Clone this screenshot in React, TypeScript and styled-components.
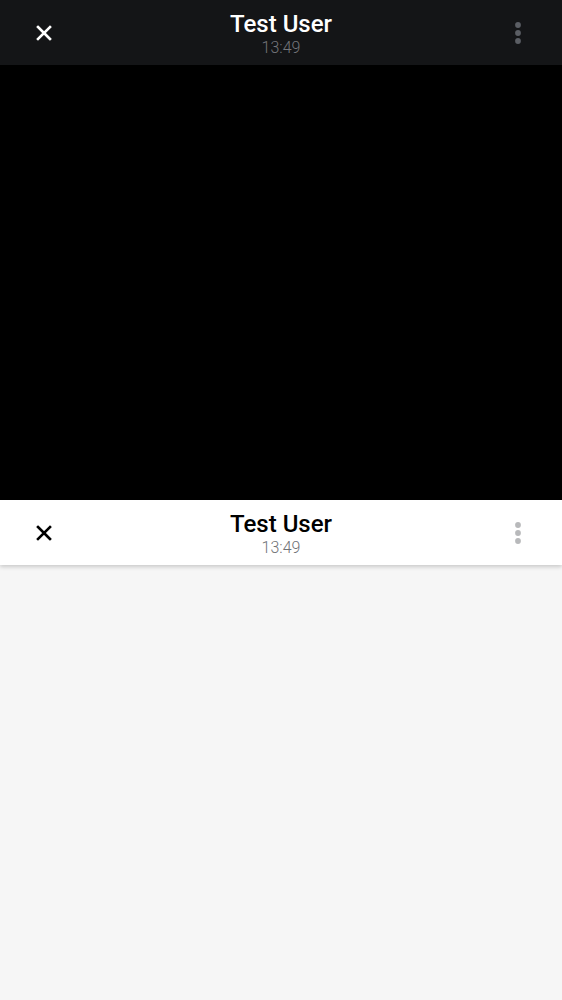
import React from "react";
import styled, { createGlobalStyle } from "styled-components";

const Global = createGlobalStyle`
  html, body { margin: 0; padding: 0; }
  body { background: #f6f6f6; font-family: Roboto, "Noto Sans", sans-serif; }
`;

const Page = styled.div`
  width: 562px;
  min-height: 1000px;
  display: flex;
  flex-direction: column;
  background: #f6f6f6;
`;

const Header = styled.header<{ $dark?: boolean }>`
  height: 65px;
  flex: none;
  display: grid;
  grid-template-columns: 88px 1fr 88px;
  align-items: center;
  background: ${(p) => (p.$dark ? "#141517" : "#ffffff")};
  color: ${(p) => (p.$dark ? "#ffffff" : "#000000")};
  box-shadow: ${(p) => (p.$dark ? "none" : "0 2px 4px rgba(0,0,0,0.18)")};
  position: relative;
  z-index: 1;
`;

const IconButton = styled.button<{ $color: string }>`
  border: 0;
  background: transparent;
  padding: 0;
  width: 88px;
  height: 65px;
  display: flex;
  align-items: center;
  justify-content: center;
  color: ${(p) => p.$color};
`;

const TitleBox = styled.div`
  display: flex;
  flex-direction: column;
  align-items: center;
  padding-top: 2px;
`;

const Title = styled.div`
  font-size: 24px;
  font-weight: 500;
  line-height: 24px;
`;

const Time = styled.div<{ $dark?: boolean }>`
  font-size: 16px;
  font-weight: 300;
  line-height: 16px;
  color: ${(p) => (p.$dark ? "#74767b" : "#707276")};
  margin-top: 4px;
`;

const Video = styled.div`
  height: 435px;
  background: #000;
  flex: none;
`;

const Body = styled.div`
  flex: 1;
  background: #f6f6f6;
`;

const CloseIcon = () => (
  <svg width="16" height="16" viewBox="0 0 16 16">
    <path d="M2 2 L14 14 M14 2 L2 14" stroke="currentColor" strokeWidth="2.6" strokeLinecap="square" />
  </svg>
);

const MoreIcon = () => (
  <svg width="8" height="24" viewBox="0 0 8 24">
    <circle cx="4" cy="4" r="2.9" fill="currentColor" />
    <circle cx="4" cy="12" r="2.9" fill="currentColor" />
    <circle cx="4" cy="20" r="2.9" fill="currentColor" />
  </svg>
);

const Bar = ({ dark }: { dark?: boolean }) => (
  <Header $dark={dark}>
    <IconButton $color={dark ? "#ffffff" : "#000000"}>
      <CloseIcon />
    </IconButton>
    <TitleBox>
      <Title>Test User</Title>
      <Time $dark={dark}>13:49</Time>
    </TitleBox>
    <IconButton $color={dark ? "#5b5e64" : "#b8b9bb"}>
      <MoreIcon />
    </IconButton>
  </Header>
);

export default function App() {
  return (
    <Page>
      <Global />
      <Bar dark />
      <Video />
      <Bar />
      <Body />
    </Page>
  );
}
